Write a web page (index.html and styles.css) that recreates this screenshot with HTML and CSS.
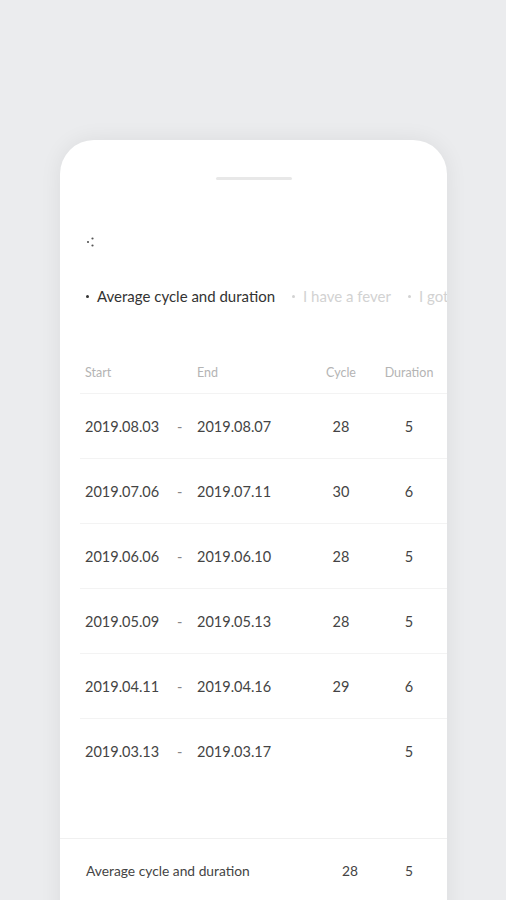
FILE: index.html
```html
<!DOCTYPE html>
<html lang="en">
<head>
    <meta charset="UTF-8">
    <meta name="viewport" content="width=device-width, initial-scale=1.0">
    <title>Cycle history</title>
    <link rel="stylesheet" href="styles.css">
</head>
<body>
    <div class="sheet">
        <div class="handle"></div>

        <div class="menu-icon">
            <svg width="12" height="14" viewBox="0 0 12 14">
                <circle cx="2" cy="7" r="1.1" fill="#555"/>
                <circle cx="6.5" cy="3.5" r="1.1" fill="#555"/>
                <circle cx="6.5" cy="10.5" r="1.1" fill="#555"/>
            </svg>
        </div>

        <div class="tabs">
            <div class="tab active"><span class="dot"></span>Average cycle and duration</div>
            <div class="tab"><span class="dot"></span>I have a fever</div>
            <div class="tab"><span class="dot"></span>I got a cold</div>
        </div>

        <div class="table">
            <div class="row head">
                <span class="start">Start</span>
                <span class="dash"></span>
                <span class="end">End</span>
                <span class="num">Cycle</span>
                <span class="num">Duration</span>
            </div>
            <div class="row">
                <span class="start">2019.08.03</span>
                <span class="dash">-</span>
                <span class="end">2019.08.07</span>
                <span class="num">28</span>
                <span class="num">5</span>
            </div>
            <div class="row">
                <span class="start">2019.07.06</span>
                <span class="dash">-</span>
                <span class="end">2019.07.11</span>
                <span class="num">30</span>
                <span class="num">6</span>
            </div>
            <div class="row">
                <span class="start">2019.06.06</span>
                <span class="dash">-</span>
                <span class="end">2019.06.10</span>
                <span class="num">28</span>
                <span class="num">5</span>
            </div>
            <div class="row">
                <span class="start">2019.05.09</span>
                <span class="dash">-</span>
                <span class="end">2019.05.13</span>
                <span class="num">28</span>
                <span class="num">5</span>
            </div>
            <div class="row">
                <span class="start">2019.04.11</span>
                <span class="dash">-</span>
                <span class="end">2019.04.16</span>
                <span class="num">29</span>
                <span class="num">6</span>
            </div>
            <div class="row last">
                <span class="start">2019.03.13</span>
                <span class="dash">-</span>
                <span class="end">2019.03.17</span>
                <span class="num"></span>
                <span class="num">5</span>
            </div>
        </div>

        <div class="summary">
            <span class="label">Average cycle and duration</span>
            <span class="num">28</span>
            <span class="num">5</span>
        </div>
    </div>
</body>
</html>
```

FILE: styles.css
```css
body {
    margin: 0;
    background: #ebecee;
    font-family: Lato, "Noto Sans", sans-serif;
    color: #444;
    height: 900px;
    overflow: hidden;
}

.sheet {
    margin: 140px 0 0 60px;
    width: 387px;
    height: 800px;
    background: #fff;
    border-radius: 34px 34px 0 0;
    box-shadow: 0 0 22px rgba(0, 0, 0, 0.07);
    overflow: hidden;
}

.handle {
    width: 76px;
    height: 3px;
    margin: 37px auto 0;
    background: #e8e8e8;
    border-radius: 2px;
}

.menu-icon {
    margin: 55px 0 0 26px;
    height: 14px;
}

.menu-icon svg {
    display: block;
}

.tabs {
    display: flex;
    gap: 17px;
    margin-top: 37px;
    padding-left: 26px;
    white-space: nowrap;
    font-size: 15px;
    line-height: 20px;
    color: #d2d2d2;
}

.tab {
    display: flex;
    align-items: center;
}

.tab .dot {
    width: 3px;
    height: 3px;
    border-radius: 50%;
    background: #d2d2d2;
    margin-right: 8px;
}

.tab.active {
    color: #333;
}

.tab.active .dot {
    background: #333;
}

.table {
    margin-top: 45px;
    margin-left: 20px;
}

.row {
    display: grid;
    grid-template-columns: 92px 20px 110px 68px 68px;
    align-items: center;
    height: 64px;
    padding-left: 5px;
    border-bottom: 1px solid #f3f3f3;
    font-size: 14.5px;
}

.row.head {
    height: 42px;
    font-size: 12.5px;
    color: #b4b4b4;
}

.row.last {
    border-bottom: none;
}

.dash {
    color: #888;
}

.num {
    text-align: center;
}

.summary {
    display: grid;
    grid-template-columns: 230px 68px 50px;
    align-items: center;
    height: 62px;
    margin-top: 55px;
    padding-left: 26px;
    border-top: 1px solid #f0f0f0;
    font-size: 13.8px;
}
```
